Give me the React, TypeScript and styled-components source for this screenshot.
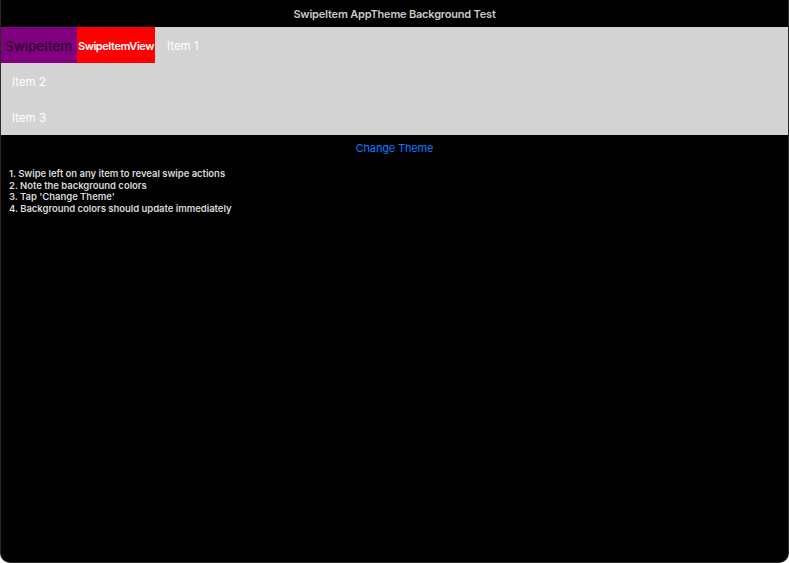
import React from "react";
import styled, { createGlobalStyle } from "styled-components";

const GlobalStyle = createGlobalStyle`
  html, body {
    margin: 0;
    padding: 0;
    background: #ffffff;
  }
  body {
    font-family: Inter, "Noto Sans", "Liberation Sans", sans-serif;
  }
`;

const Window = styled.div`
  width: 789px;
  height: 563px;
  box-sizing: border-box;
  background: #000;
  border: 1px solid #2a2a2a;
  border-top: none;
  border-radius: 0 0 10px 10px;
  overflow: hidden;
  display: flex;
  flex-direction: column;
`;

const TitleBar = styled.div`
  height: 27px;
  flex: 0 0 auto;
  display: flex;
  align-items: center;
  justify-content: center;
  color: #c9c9c9;
  font-size: 11px;
  font-weight: 600;
  letter-spacing: -0.2px;
`;

const List = styled.div`
  background: #d3d3d3;
  display: flex;
  flex-direction: column;
  margin: 0 -1px;
`;

const Row = styled.div`
  height: 36px;
  flex: 0 0 auto;
  display: flex;
  align-items: stretch;
`;

const Action = styled.div<{ $bg: string; $fg: string; $size: number; $bold?: boolean }>`
  width: 77px;
  flex: 0 0 auto;
  padding-top: 1px;
  box-sizing: border-box;
  background: ${(p) => p.$bg};
  color: ${(p) => p.$fg};
  font-size: ${(p) => p.$size}px;
  font-weight: ${(p) => (p.$bold ? 600 : 400)};
  letter-spacing: ${(p) => (p.$bold ? "-0.45px" : "0")};
  display: flex;
  align-items: center;
  justify-content: center;
  white-space: nowrap;
  & + & {
    width: 78px;
  }
`;

const ItemLabel = styled.div`
  display: flex;
  align-items: center;
  padding: 1px 0 0 12px;
  color: #ffffff;
  font-size: 11.5px;
`;

const ThemeButton = styled.button`
  align-self: center;
  background: none;
  border: none;
  padding: 0;
  margin-top: 6px;
  height: 14px;
  color: #0a7cff;
  font-family: inherit;
  font-size: 11px;
  letter-spacing: -0.15px;
  cursor: pointer;
`;

const Steps = styled.div`
  margin-top: 13px;
  padding-left: 8px;
  color: #d8d8d8;
  font-size: 9.5px;
  font-weight: 600;
  line-height: 11.5px;
  letter-spacing: -0.03px;
`;

const items = ["Item 1", "Item 2", "Item 3"];

const steps = [
  "1. Swipe left on any item to reveal swipe actions",
  "2. Note the background colors",
  "3. Tap 'Change Theme'",
  "4. Background colors should update immediately",
];

export default function App() {
  return (
    <>
      <GlobalStyle />
      <Window>
        <TitleBar>SwipeItem AppTheme Background Test</TitleBar>
        <List>
          {items.map((label, i) => (
            <Row key={label}>
              {i === 0 && (
                <>
                  <Action $bg="#800080" $fg="#1a001a" $size={13.5}>
                    SwipeItem
                  </Action>
                  <Action $bg="#ff0000" $fg="#ffffff" $size={11} $bold>
                    SwipeItemView
                  </Action>
                </>
              )}
              <ItemLabel>{label}</ItemLabel>
            </Row>
          ))}
        </List>
        <ThemeButton>Change Theme</ThemeButton>
        <Steps>
          {steps.map((s) => (
            <div key={s}>{s}</div>
          ))}
        </Steps>
      </Window>
    </>
  );
}
